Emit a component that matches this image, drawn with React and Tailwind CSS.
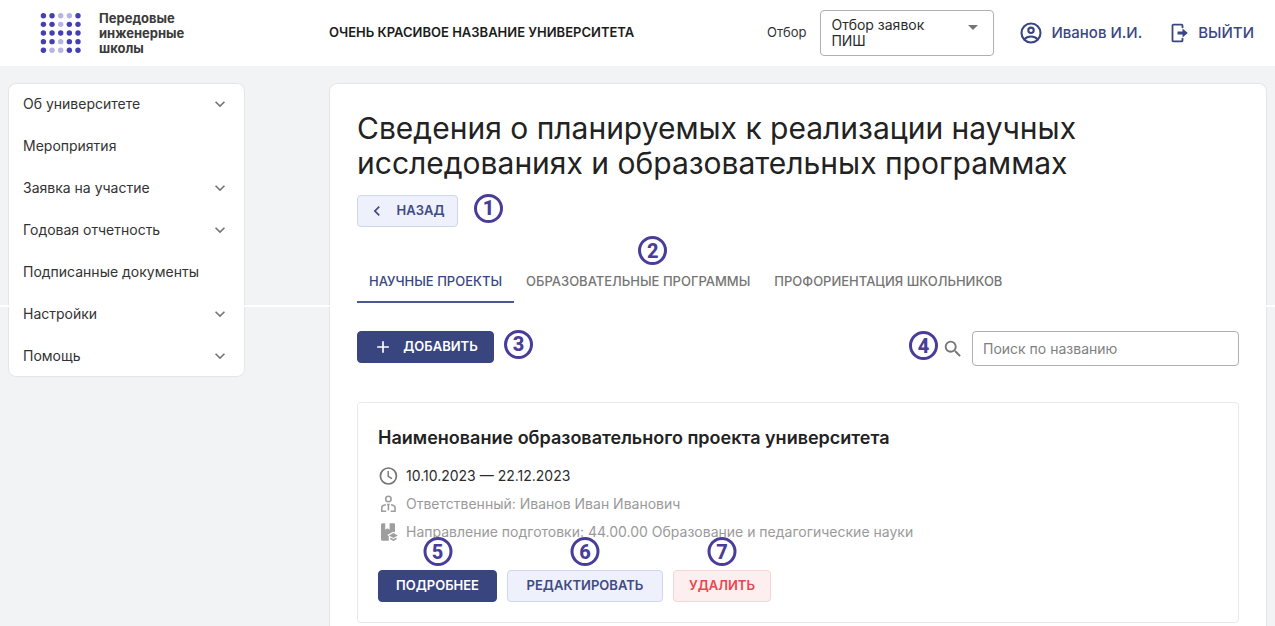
import { useState } from "react";
import clsx from "clsx";
import {
  MdAdd,
  MdArrowDropDown,
  MdChevronLeft,
  MdKeyboardArrowDown,
  MdSearch,
} from "react-icons/md";

const menu = [
  { title: "Об университете", nested: true },
  { title: "Мероприятия", nested: false },
  { title: "Заявка на участие", nested: true },
  { title: "Годовая отчетность", nested: true },
  { title: "Подписанные документы", nested: false },
  { title: "Настройки", nested: true },
  { title: "Помощь", nested: true },
];

const tabs = [
  { title: "НАУЧНЫЕ ПРОЕКТЫ" },
  { title: "ОБРАЗОВАТЕЛЬНЫЕ ПРОГРАММЫ", step: 2 },
  { title: "ПРОФОРИЕНТАЦИЯ ШКОЛЬНИКОВ" },
];

// 1 - dark dot, 0 - light dot
const logoDots = ["11001", "11011", "11111", "11011", "10011"];

function Logo() {
  return (
    <svg viewBox="0 0 42 42" className="size-[42px] shrink-0" aria-hidden="true">
      {logoDots.map((row, y) =>
        row
          .split("")
          .map((dot, x) => (
            <circle
              key={`${x}-${y}`}
              cx={3.4 + x * 8.65}
              cy={3.7 + y * 8.65}
              r="2.7"
              fill={dot === "1" ? "#4340b5" : "#b6b4e2"}
            />
          ))
      )}
    </svg>
  );
}

function UserIcon() {
  return (
    <svg viewBox="0 0 24 24" className="size-6" fill="none" stroke="currentColor" strokeWidth="2.1" aria-hidden="true">
      <circle cx="12" cy="12" r="9.5" />
      <circle cx="12" cy="9.3" r="2.7" />
      <path d="M5.4 18.4C7 16.4 9.3 15.5 12 15.5s5 .9 6.6 2.9" />
    </svg>
  );
}

function ExitIcon() {
  return (
    <svg viewBox="0 0 20 20" className="size-5" fill="none" stroke="currentColor" strokeWidth="1.8" aria-hidden="true">
      <path d="M12.5 5V2.6a1 1 0 0 0-1-1h-8a1 1 0 0 0-1 1v14.8a1 1 0 0 0 1 1h8a1 1 0 0 0 1-1V15" />
      <path d="M7.5 8.4h5V5.5L17.8 10l-5.3 4.5v-2.9h-5z" fill="currentColor" stroke="none" />
    </svg>
  );
}

function ClockIcon() {
  return (
    <svg viewBox="0 0 20 20" className="size-5" fill="none" stroke="#757575" strokeWidth="1.7" aria-hidden="true">
      <circle cx="10.4" cy="10" r="8" />
      <path d="M10.2 5v5.4l3.8 2.2" strokeWidth="1.4" />
    </svg>
  );
}

function PersonIcon() {
  return (
    <svg viewBox="0 0 20 20" className="size-5" fill="none" stroke="#9e9e9e" strokeWidth="1.6" aria-hidden="true">
      <circle cx="10.4" cy="5" r="2.7" />
      <path d="M7.8 10.8c-2.6.5-4 1.3-4 2.7v3.7h4.4M13 10.8c2.6.5 4 1.3 4 2.7v3.7h-4.4" />
      <path d="M10.4 10v6.4" />
      <path d="M8.6 9.8h3.6l-1.8 2.6z" fill="#9e9e9e" stroke="none" />
    </svg>
  );
}

function BookIcon() {
  return (
    <svg viewBox="0 0 20 20" className="size-5" fill="#9e9e9e" aria-hidden="true">
      <path d="M4.6 1.2h2.6v6.6l2.2-1.6 2.2 1.6V1.2h4.2A1.2 1.2 0 0 1 17 2.4v8.2l-1.8-.8-6 3.2 1.6 1v4.8H4.6A1.6 1.6 0 0 1 3 17.2V2.8a1.6 1.6 0 0 1 1.6-1.6z" />
      <path d="M15.4 11l4.4 2.5-4.4 2.5-4.4-2.5z" />
      <path d="M12.2 15.4l3.2 1.7 3.2-1.7v1.9l-3.2 1.8-3.2-1.8z" />
    </svg>
  );
}

function Step({ number, className }) {
  return (
    <span
      className={clsx(
        "flex size-[29px] items-center justify-center rounded-full border-3 border-[#483d99] font-['Roboto',sans-serif] text-xl leading-none font-extrabold text-[#483d99]",
        className
      )}
    >
      {number}
    </span>
  );
}

function Button({ variant = "primary", className, children }) {
  return (
    <button
      type="button"
      className={clsx(
        "flex h-8 items-center justify-center rounded border text-[13px] font-semibold",
        variant === "primary" && "border-[#38457f] bg-[#38457f] text-white",
        variant === "light" && "border-[#cfd6ef] bg-[#eef0fc] text-[#3f4b83]",
        variant === "danger" && "border-[#f6d5d8] bg-[#fdeeef] text-[#e5484d]",
        className
      )}
    >
      {children}
    </button>
  );
}

function Header() {
  return (
    <header className="flex h-[66px] items-center bg-white pr-[21px] pl-10">
      <div className="flex w-[289px] shrink-0 items-center gap-[17px]">
        <Logo />
        <p className="text-[13px] leading-[15px] font-bold text-[#3a3a3a]">
          Передовые
          <br />
          инженерные
          <br />
          школы
        </p>
      </div>
      <p className="flex-1 text-[13px] font-semibold text-[#1c1c1c]">
        ОЧЕНЬ КРАСИВОЕ НАЗВАНИЕ УНИВЕРСИТЕТА
      </p>
      <label htmlFor="selection" className="mr-[14px] text-[13px] text-[#333]">
        Отбор
      </label>
      <div className="relative mr-[25px] flex h-[46px] w-[174px] items-center rounded border border-[#b0b0b0] px-[10px]">
        <span className="w-28 text-sm leading-4 text-[#2b2b2b]" aria-hidden="true">
          Отбор заявок ПИШ
        </span>
        <MdArrowDropDown className="absolute top-1 right-2 size-6 text-[#757575]" />
        <select id="selection" className="absolute inset-0 w-full opacity-0">
          <option>Отбор заявок ПИШ</option>
        </select>
      </div>
      <div className="flex items-center gap-7 text-[15px] font-medium text-[#3a4682]">
        <a href="#profile" className="flex items-center gap-2">
          <UserIcon />
          Иванов И.И.
        </a>
        <a href="#logout" className="flex items-center gap-2">
          <ExitIcon />
          ВЫЙТИ
        </a>
      </div>
    </header>
  );
}

function Sidebar() {
  return (
    <nav className="w-[237px] shrink-0 rounded-lg bg-white ring-1 ring-[#e3e5e8] ring-inset">
      {menu.map((item) => (
        <a
          key={item.title}
          href="#menu"
          className="flex h-[42px] items-center justify-between px-[15px] text-sm text-[#333]"
        >
          {item.title}
          {item.nested && <MdKeyboardArrowDown className="size-5 text-[#757575]" />}
        </a>
      ))}
    </nav>
  );
}

function ProjectCard() {
  return (
    <article className="mt-9 rounded border border-[#e8e8ea] px-5 pt-[21px] pb-5">
      <h2 className="text-lg leading-7 font-semibold text-[#222]">
        Наименование образовательного проекта университета
      </h2>
      <div className="mt-[10px] text-sm leading-7 text-[#9a9a9a]">
        <p className="flex items-center gap-2 text-[#2b2b2b]">
          <ClockIcon />
          10.10.2023 — 22.12.2023
        </p>
        <p className="flex items-center gap-2">
          <PersonIcon />
          Ответственный: Иванов Иван Иванович
        </p>
        <p className="flex items-center gap-2">
          <BookIcon />
          Направление подготовки: 44.00.00 Образование и педагогические науки
        </p>
      </div>
      <div className="mt-6 flex gap-[10px]">
        <div className="relative">
          <Button className="w-[119px]">ПОДРОБНЕЕ</Button>
          <Step number={5} className="absolute bottom-full left-1/2 mb-1 -translate-x-1/2" />
        </div>
        <div className="relative">
          <Button variant="light" className="w-[156px]">
            РЕДАКТИРОВАТЬ
          </Button>
          <Step number={6} className="absolute bottom-full left-1/2 mb-1 -translate-x-1/2" />
        </div>
        <div className="relative">
          <Button variant="danger" className="w-[98px]">
            УДАЛИТЬ
          </Button>
          <Step number={7} className="absolute bottom-full left-1/2 mb-1 -translate-x-1/2" />
        </div>
      </div>
    </article>
  );
}

export default function App() {
  const [activeTab, setActiveTab] = useState(0);
  const [search, setSearch] = useState("");

  return (
    <div className="relative min-h-screen bg-[#f1f3f5] font-['Inter','Noto_Sans',sans-serif]">
      <Header />
      <div className="flex items-start gap-[84px] px-2 pt-[17px]">
        <Sidebar />
        <main className="min-w-0 flex-1 rounded-t-lg bg-white p-7 ring-1 ring-[#e3e5e8] ring-inset">
          <h1 className="max-w-[780px] text-3xl leading-[35px] font-normal text-[#222]">
            Сведения о планируемых к реализации научных исследованиях и
            образовательных программах
          </h1>
          <div className="mt-[14px] flex items-center gap-4">
            <Button variant="light" className="w-[101px] gap-[10px] pr-1">
              <MdChevronLeft className="size-5" />
              НАЗАД
            </Button>
            <Step number={1} className="-mt-1.5" />
          </div>

          <div role="tablist" className="mt-[34px] flex">
            {tabs.map((tab, i) => (
              <button
                key={tab.title}
                type="button"
                role="tab"
                aria-selected={activeTab === i}
                onClick={() => setActiveTab(i)}
                className={clsx(
                  "relative h-[42px] border-b-2 px-3 pt-0.5 text-[13px] font-medium",
                  activeTab === i
                    ? "border-[#4a5896] text-[#3a4682]"
                    : "border-transparent text-[#757575]"
                )}
              >
                {tab.title}
                {tab.step && (
                  <Step number={tab.step} className="absolute -top-[25px] left-1/2" />
                )}
              </button>
            ))}
          </div>

          <div className="mt-7 flex items-start justify-between">
            <div className="flex items-center gap-[10px]">
              <Button className="w-[137px] gap-[10px]">
                <MdAdd className="size-5" />
                ДОБАВИТЬ
              </Button>
              <Step number={3} className="-mt-1.5" />
            </div>
            <div className="flex items-center">
              <Step number={4} className="-mt-1.5 mr-1" />
              <label htmlFor="search" aria-label="Поиск по названию" className="mr-2">
                <MdSearch className="size-[22px] text-[#757575]" />
              </label>
              <input
                id="search"
                type="text"
                value={search}
                onChange={(e) => setSearch(e.target.value)}
                placeholder="Поиск по названию"
                className="h-[35px] w-[267px] rounded border border-[#b0b0b0] px-[10px] text-sm text-[#333] placeholder:text-[#7f7f7f]"
              />
            </div>
          </div>

          <ProjectCard />
        </main>
      </div>
      <div className="pointer-events-none absolute inset-x-0 top-[305px] h-[2px] bg-white" />
    </div>
  );
}
